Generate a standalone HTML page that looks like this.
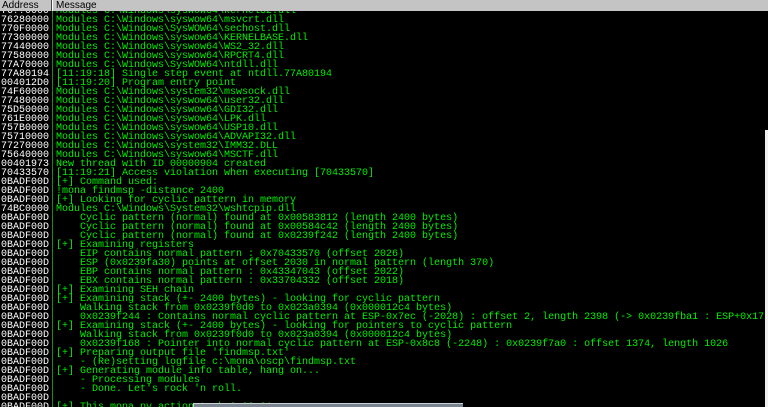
<!DOCTYPE html>
<html><head><meta charset="utf-8"><style>
html,body{margin:0;padding:0;background:#000;width:768px;height:407px;overflow:hidden;position:relative}
#log{position:absolute;left:0;top:7px;font-family:"Liberation Mono",monospace;font-size:10px;line-height:9px;}
.r{height:9px;white-space:pre;overflow:visible}
.a{display:inline-block;width:56px;color:#fff;padding-left:1px;box-sizing:border-box;vertical-align:top}
.m{color:#00f000}
#hdr{position:absolute;left:0;top:0;width:768px;height:11px;background:#c4c4c4;font-family:"Liberation Sans",sans-serif;font-size:10px;line-height:11px;color:#000}
#hdr span{position:absolute;top:0}
#sep{position:absolute;left:51px;top:0;width:1px;height:11px;background:#444;border-right:1px solid #fff}
#vl{position:absolute;left:52px;top:11px;width:1px;height:396px;background:#1a8a1a}
#rs{position:absolute;left:765px;top:130px;width:3px;height:277px;background:#f0f0f0}
#bx{position:absolute;left:193px;top:403px;width:269px;height:4px;background:#7a8590;border-top:1px solid #c8d0d8;border-left:1px solid #c8d0d8}
</style></head><body>
<div id="log"><div class="r"><span class="a">76??0000</span><span class="m">Modules C:\Windows\syswow64\kernel32.dll</span></div><div class="r"><span class="a">76280000</span><span class="m">Modules C:\Windows\syswow64\msvcrt.dll</span></div><div class="r"><span class="a">770F0000</span><span class="m">Modules C:\Windows\SysWOW64\sechost.dll</span></div><div class="r"><span class="a">77300000</span><span class="m">Modules C:\Windows\syswow64\KERNELBASE.dll</span></div><div class="r"><span class="a">77440000</span><span class="m">Modules C:\Windows\syswow64\WS2_32.dll</span></div><div class="r"><span class="a">77580000</span><span class="m">Modules C:\Windows\syswow64\RPCRT4.dll</span></div><div class="r"><span class="a">77A70000</span><span class="m">Modules C:\Windows\SysWOW64\ntdll.dll</span></div><div class="r"><span class="a">77A80194</span><span class="m">[11:19:18] Single step event at ntdll.77A80194</span></div><div class="r"><span class="a">004012D0</span><span class="m">[11:19:20] Program entry point</span></div><div class="r"><span class="a">74F60000</span><span class="m">Modules C:\Windows\system32\mswsock.dll</span></div><div class="r"><span class="a">77480000</span><span class="m">Modules C:\Windows\syswow64\user32.dll</span></div><div class="r"><span class="a">75D50000</span><span class="m">Modules C:\Windows\syswow64\GDI32.dll</span></div><div class="r"><span class="a">761E0000</span><span class="m">Modules C:\Windows\syswow64\LPK.dll</span></div><div class="r"><span class="a">757B0000</span><span class="m">Modules C:\Windows\syswow64\USP10.dll</span></div><div class="r"><span class="a">75710000</span><span class="m">Modules C:\Windows\syswow64\ADVAPI32.dll</span></div><div class="r"><span class="a">77270000</span><span class="m">Modules C:\Windows\system32\IMM32.DLL</span></div><div class="r"><span class="a">75640000</span><span class="m">Modules C:\Windows\syswow64\MSCTF.dll</span></div><div class="r"><span class="a">00401973</span><span class="m">New thread with ID 00000904 created</span></div><div class="r"><span class="a">70433570</span><span class="m">[11:19:21] Access violation when executing [70433570]</span></div><div class="r"><span class="a">0BADF00D</span><span class="m">[+] Command used:</span></div><div class="r"><span class="a">0BADF00D</span><span class="m">!mona findmsp -distance 2400</span></div><div class="r"><span class="a">0BADF00D</span><span class="m">[+] Looking for cyclic pattern in memory</span></div><div class="r"><span class="a">74BC0000</span><span class="m">Modules C:\Windows\System32\wshtcpip.dll</span></div><div class="r"><span class="a">0BADF00D</span><span class="m">    Cyclic pattern (normal) found at 0x00583812 (length 2400 bytes)</span></div><div class="r"><span class="a">0BADF00D</span><span class="m">    Cyclic pattern (normal) found at 0x00584c42 (length 2400 bytes)</span></div><div class="r"><span class="a">0BADF00D</span><span class="m">    Cyclic pattern (normal) found at 0x0239f242 (length 2400 bytes)</span></div><div class="r"><span class="a">0BADF00D</span><span class="m">[+] Examining registers</span></div><div class="r"><span class="a">0BADF00D</span><span class="m">    EIP contains normal pattern : 0x70433570 (offset 2026)</span></div><div class="r"><span class="a">0BADF00D</span><span class="m">    ESP (0x0239fa30) points at offset 2030 in normal pattern (length 370)</span></div><div class="r"><span class="a">0BADF00D</span><span class="m">    EBP contains normal pattern : 0x43347043 (offset 2022)</span></div><div class="r"><span class="a">0BADF00D</span><span class="m">    EBX contains normal pattern : 0x33704332 (offset 2018)</span></div><div class="r"><span class="a">0BADF00D</span><span class="m">[+] Examining SEH chain</span></div><div class="r"><span class="a">0BADF00D</span><span class="m">[+] Examining stack (+- 2400 bytes) - looking for cyclic pattern</span></div><div class="r"><span class="a">0BADF00D</span><span class="m">    Walking stack from 0x0239f0d0 to 0x023a0394 (0x000012c4 bytes)</span></div><div class="r"><span class="a">0BADF00D</span><span class="m">    0x0239f244 : Contains normal cyclic pattern at ESP-0x7ec (-2028) : offset 2, length 2398 (-&gt; 0x0239fba1 : ESP+0x172</span></div><div class="r"><span class="a">0BADF00D</span><span class="m">[+] Examining stack (+- 2400 bytes) - looking for pointers to cyclic pattern</span></div><div class="r"><span class="a">0BADF00D</span><span class="m">    Walking stack from 0x0239f0d0 to 0x023a0394 (0x000012c4 bytes)</span></div><div class="r"><span class="a">0BADF00D</span><span class="m">    0x0239f168 : Pointer into normal cyclic pattern at ESP-0x8c8 (-2248) : 0x0239f7a0 : offset 1374, length 1026</span></div><div class="r"><span class="a">0BADF00D</span><span class="m">[+] Preparing output file 'findmsp.txt'</span></div><div class="r"><span class="a">0BADF00D</span><span class="m">    - (Re)setting logfile c:\mona\oscp\findmsp.txt</span></div><div class="r"><span class="a">0BADF00D</span><span class="m">[+] Generating module info table, hang on...</span></div><div class="r"><span class="a">0BADF00D</span><span class="m">    - Processing modules</span></div><div class="r"><span class="a">0BADF00D</span><span class="m">    - Done. Let's rock 'n roll.</span></div><div class="r"><span class="a">0BADF00D</span><span class="m"></span></div><div class="r"><span class="a">0BADF00D</span><span class="m">[+] This mona.py action took 0:00:01</span></div></div>
<div id="hdr"><span style="left:2px">Address</span><span style="left:56px">Message</span></div>
<div id="sep"></div>
<div id="vl"></div>
<div id="rs"></div>
<div id="bx"></div>
</body></html>
